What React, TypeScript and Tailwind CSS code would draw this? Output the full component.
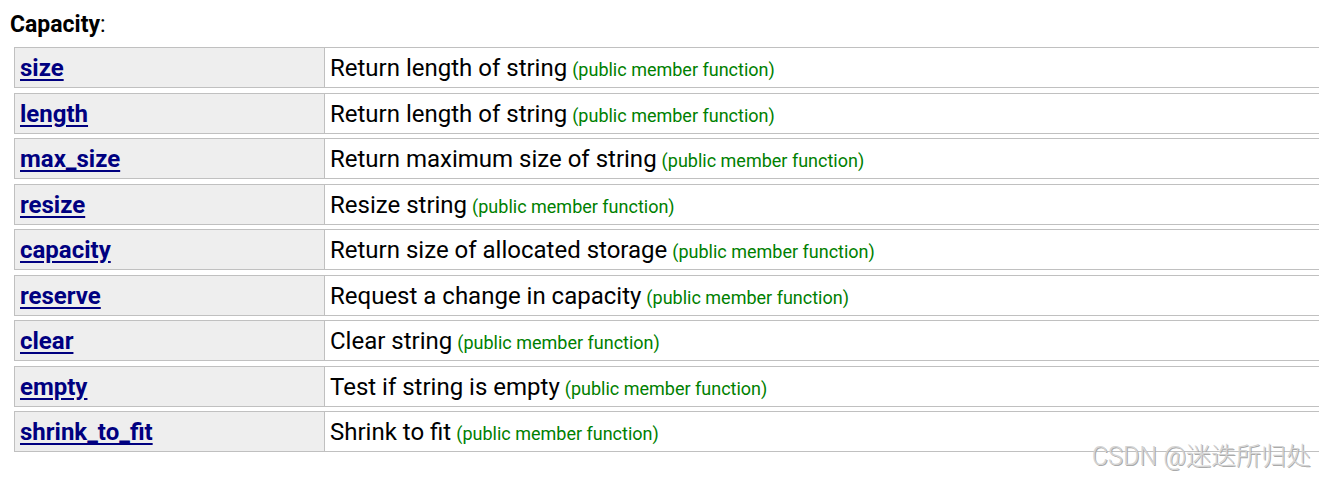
const ROWS: [string, string][] = [
  ['size', 'Return length of string'],
  ['length', 'Return length of string'],
  ['max_size', 'Return maximum size of string'],
  ['resize', 'Resize string'],
  ['capacity', 'Return size of allocated storage'],
  ['reserve', 'Request a change in capacity'],
  ['clear', 'Clear string'],
  ['empty', 'Test if string is empty'],
  ['shrink_to_fit', 'Shrink to fit'],
]

export default function App() {
  return (
    <div className="relative w-[1319px] h-[479px] overflow-hidden bg-white font-['Roboto',sans-serif] text-black">
      <div className="pt-[10px] pl-[10px] text-[23px] leading-[30px]">
        <b>Capacity</b>:
      </div>

      <div className="mt-[7px] ml-[14px] flex flex-col">
        {ROWS.map(([name, desc], i) => (
          <div
            key={name}
            className={`flex h-[41px] border border-r-0 border-[#c0c0c0] ${i === 0 ? '' : i % 2 === 1 ? 'mt-[5px]' : 'mt-[4px]'}`}
          >
            <div className="w-[310px] shrink-0 bg-[#eeeeee] border-r border-[#c0c0c0] pl-[5px] flex items-center">
              <a href="#" className="text-[24px] font-bold text-[#000080] underline underline-offset-[3px]">
                {name}
              </a>
            </div>
            <div className="flex-1 pl-[5px] flex items-center">
              <span className="text-[24px]">{desc}</span>
              <span className="ml-[5px] text-[18px] text-[#008000] mt-[3px]">(public member function)</span>
            </div>
          </div>
        ))}
      </div>

      <div className="absolute right-[8px] top-[442px] text-[25px] leading-[30px] text-[#d4d4d4] [text-shadow:1px_1px_0_#aaa] font-['Roboto','Noto_Sans_CJK_SC',sans-serif] font-light">
        CSDN @迷迭所归处
      </div>
    </div>
  )
}
